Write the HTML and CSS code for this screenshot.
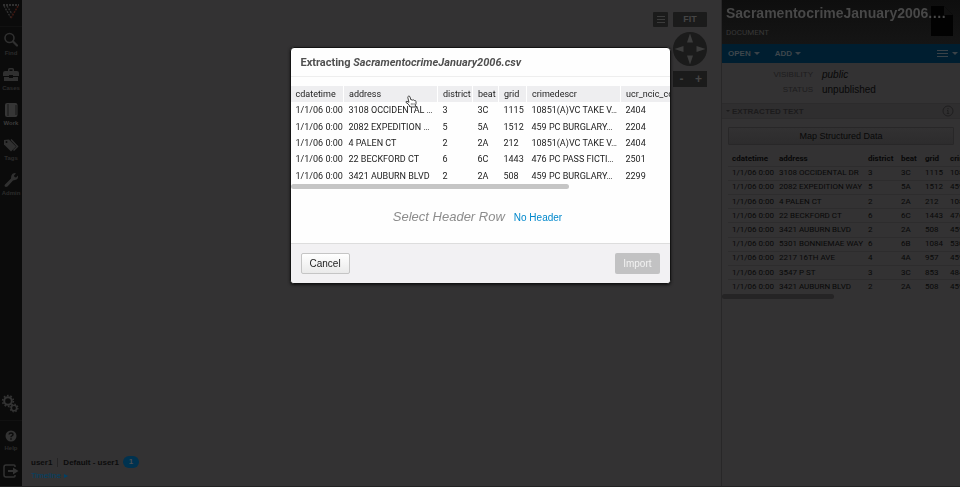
FILE: index.html
```html
<!DOCTYPE html>
<html lang="en">
<head>
<meta charset="utf-8">
<title>Extracting SacramentocrimeJanuary2006.csv</title>
<link rel="stylesheet" href="styles.css">
</head>
<body>
<div class="app">
  <nav class="sidebar">
    <a class="logo" href="#" aria-label="Home">
      <svg width="18" height="18" viewBox="0 0 18 18" fill="none"><path d="M1 3H17" stroke="#303030" stroke-width="2" stroke-dasharray="2 1"/><path d="M2 4l7 12M5 4l5 8" stroke="#303030" stroke-width="1.400" stroke-dasharray="2 1"/><path d="M16 4l-7 12" stroke="#3c1812" stroke-width="1.600" stroke-dasharray="2 1"/></svg>
    </a>
    <a class="nav-item" href="#"><svg width="16" height="16" viewBox="0 0 16 16" fill="none" stroke="#303030"><circle cx="6.500" cy="6" r="4.500" stroke-width="1.600"/><path d="M10 9.500l4 4" stroke-width="2.200" stroke-linecap="round"/></svg><span>Find</span></a>
    <a class="nav-item" href="#"><svg width="16" height="16" viewBox="0 0 16 16" fill="#303030"><path d="M5 4V2.500Q5 1 6.500 1h3Q11 1 11 2.500V4h3q2 0 2 2v3h-6V8H6v1H0V6q0-2 2-2zM6.500 4h3V2.500h-3zM1 10h5v1h4v-1h5v4H1z"/></svg><span>Cases</span></a>
    <a class="nav-item active" href="#"><svg width="16" height="16" viewBox="0 0 16 16"><rect x="2" y="1" width="12.500" height="14" rx="2" fill="#363636"/><path d="M5 2v12M13 3v10" stroke="#161616"/></svg><span>Work</span></a>
    <a class="nav-item" href="#"><svg width="16" height="16" viewBox="0 0 16 16"><path d="M1 3l5-.500 7 7-5 5-7-7z" fill="#303030"/><path d="M8 2.500l6.500 7-4 4" fill="none" stroke="#303030" stroke-width="1.500"/><circle cx="3.500" cy="5" r="1" fill="#0c0c0c"/></svg><span>Tags</span></a>
    <a class="nav-item" href="#"><svg width="16" height="16" viewBox="0 0 16 16"><path d="M10 1.500q2-.900 3 0l-2 2 .500 1.500 1.500.500 2-2q.500 4-3 4.500l-2 .500-5.500 6q-2 1-3-.500 0-1 .500-1.500L8 6.500q0-4 2-5z" fill="#303030"/></svg><span>Admin</span></a>
    <div class="nav-bottom">
      <a class="settings" href="#" aria-label="Settings"><svg width="18" height="20" viewBox="0 0 18 20" fill="none" stroke="#333"><circle cx="7" cy="7" r="3.800" stroke-width="2"/><circle cx="7" cy="7" r="5.400" stroke-width="1.600" stroke-dasharray="1.700 1.693"/><circle cx="13" cy="14" r="2.700" stroke-width="1.600"/><circle cx="13" cy="14" r="3.900" stroke-width="1.200" stroke-dasharray="1.500 1.563"/></svg></a>
      <a class="nav-item help" href="#"><svg width="14" height="14" viewBox="0 0 14 14"><circle cx="7" cy="7" r="5.500" fill="#333"/><path d="M5 5.500Q5.200 4 7 4q2 0 2 1.500Q9 6.300 7.800 7 7 7.500 7 8.300M7 9.300v1.400" fill="none" stroke="#0c0c0c" stroke-width="1.400"/></svg><span>Help</span></a>
      <a class="exit" href="#" aria-label="Log out"><svg width="16" height="14" viewBox="0 0 16 14"><path d="M12 3V2q0-1-1-1H3Q1 1 1 3v8q0 2 2 2h8q1 0 1-1v-1" fill="none" stroke="#333" stroke-width="1.500"/><path d="M5 6h5V3.500L15.500 7 10 10.500V8H5z" fill="#333"/></svg></a>
    </div>
  </nav>

  <main class="canvas">
    <div class="tools">
      <button class="tool list" aria-label="Options"><svg width="8" height="7" viewBox="0 0 8 7"><path d="M0 .500h8M0 3.500h8M0 6.500h8" stroke="#3c3c3c"/></svg></button>
      <div class="tool-stack">
        <button class="tool fit">FIT</button>
        <button class="pan" aria-label="Pan"><svg width="34" height="34" viewBox="0 0 34 34" fill="#3c3c3c"><path d="M17 1.500l3 9h-6zM17 32.500l3-9h-6zM1.500 17l9-3v6zM32.500 17l-9-3v6z"/></svg></button>
        <div class="zoom"><button aria-label="Zoom out">-</button><button aria-label="Zoom in">+</button></div>
      </div>
    </div>
    <footer class="status">
      <div class="user-row"><span class="user">user1</span><span class="workspace">Default - user1</span><span class="badge">1</span></div>
      <a class="timeline" href="#">Timeline <svg width="4" height="4" viewBox="0 0 4 4"><path d="M0 0l4 2-4 2z" fill="#004268"/></svg></a>
    </footer>
  </main>

  <aside class="panel">
    <header class="panel-head">
      <h1>SacramentocrimeJanuary2006.…</h1>
      <p>DOCUMENT</p>
      <svg class="doc-icon" width="22" height="30" viewBox="0 0 22 30"><path d="M0 0h13l9 9v21H0z" fill="#020202"/><path d="M13 0v9h9z" fill="#101010"/></svg>
    </header>
    <div class="menu-bar">
      <button>OPEN <i class="caret"></i></button>
      <button>ADD <i class="caret"></i></button>
      <button class="more" aria-label="More"><svg width="11" height="7" viewBox="0 0 11 7"><path d="M0 .500h11M0 3.500h11M0 6.500h11" stroke="#3a4248"/></svg><i class="caret"></i></button>
    </div>
    <dl class="props">
      <dt>VISIBILITY</dt><dd><em>public</em></dd>
      <dt>STATUS</dt><dd>unpublished</dd>
    </dl>
    <h2 class="section"><i class="dot"></i><span>EXTRACTED TEXT</span><svg width="12" height="12" viewBox="0 0 12 12" fill="none" stroke="#1f1e1f"><circle cx="6" cy="6" r="5"/><path d="M5 5.500h1V8M4.800 8.500h2.400M6 3v1.200"/></svg></h2>
    <button class="map-button">Map Structured Data</button>
    <div class="data-scroll">
      <table class="data">
        <colgroup><col class="d-date"><col class="d-address"><col class="d-district"><col class="d-beat"><col class="d-grid"><col class="d-crime"></colgroup>
        <thead><tr><th>cdatetime</th><th>address</th><th>district</th><th>beat</th><th>grid</th><th>crimedescr</th></tr></thead>
        <tbody>
          <tr><td>1/1/06 0:00</td><td>3108 OCCIDENTAL DR</td><td>3</td><td>3C</td><td>1115</td><td>10851(A)VC</td></tr>
          <tr><td>1/1/06 0:00</td><td>2082 EXPEDITION WAY</td><td>5</td><td>5A</td><td>1512</td><td>459 PC</td></tr>
          <tr><td>1/1/06 0:00</td><td>4 PALEN CT</td><td>2</td><td>2A</td><td>212</td><td>10851(A)VC</td></tr>
          <tr><td>1/1/06 0:00</td><td>22 BECKFORD CT</td><td>6</td><td>6C</td><td>1443</td><td>476 PC</td></tr>
          <tr><td>1/1/06 0:00</td><td>3421 AUBURN BLVD</td><td>2</td><td>2A</td><td>508</td><td>459 PC</td></tr>
          <tr><td>1/1/06 0:00</td><td>5301 BONNIEMAE WAY</td><td>6</td><td>6B</td><td>1084</td><td>530</td></tr>
          <tr><td>1/1/06 0:00</td><td>2217 16TH AVE</td><td>4</td><td>4A</td><td>957</td><td>459 PC</td></tr>
          <tr><td>1/1/06 0:00</td><td>3547 P ST</td><td>3</td><td>3C</td><td>853</td><td>484</td></tr>
          <tr><td>1/1/06 0:00</td><td>3421 AUBURN BLVD</td><td>2</td><td>2A</td><td>508</td><td>459 PC</td></tr>
        </tbody>
      </table>
    </div>
    <div class="panel-thumb"></div>
  </aside>
</div>

<div class="overlay">
  <section class="modal" role="dialog" aria-labelledby="modal-title">
    <h2 id="modal-title" class="modal-title">Extracting <em>SacramentocrimeJanuary2006.csv</em></h2>
    <div class="preview-scroll">
      <table class="preview">
        <colgroup><col class="p-date"><col class="p-address"><col class="p-district"><col class="p-beat"><col class="p-grid"><col class="p-crime"><col class="p-code"></colgroup>
        <tbody>
          <tr class="hover"><td>cdatetime</td><td>address</td><td>district</td><td>beat</td><td>grid</td><td>crimedescr</td><td>ucr_ncic_code</td></tr>
          <tr><td>1/1/06 0:00</td><td>3108 OCCIDENTAL …</td><td>3</td><td>3C</td><td>1115</td><td>10851(A)VC TAKE V…</td><td>2404</td></tr>
          <tr><td>1/1/06 0:00</td><td>2082 EXPEDITION …</td><td>5</td><td>5A</td><td>1512</td><td>459 PC BURGLARY…</td><td>2204</td></tr>
          <tr><td>1/1/06 0:00</td><td>4 PALEN CT</td><td>2</td><td>2A</td><td>212</td><td>10851(A)VC TAKE V…</td><td>2404</td></tr>
          <tr><td>1/1/06 0:00</td><td>22 BECKFORD CT</td><td>6</td><td>6C</td><td>1443</td><td>476 PC PASS FICTI…</td><td>2501</td></tr>
          <tr><td>1/1/06 0:00</td><td>3421 AUBURN BLVD</td><td>2</td><td>2A</td><td>508</td><td>459 PC BURGLARY…</td><td>2299</td></tr>
        </tbody>
      </table>
    </div>
    <div class="preview-thumb"></div>
    <p class="prompt"><em>Select Header Row</em><a href="#">No Header</a></p>
    <footer class="modal-foot"><button class="cancel">Cancel</button><button class="import" disabled>Import</button></footer>
    <svg class="pointer" width="12" height="14" viewBox="0 0 12 14"><path d="M3.500 1.200q1-.600 1.500.800l1 3q1.200-.900 1.700.200 1-.800 1.600.300 1.400-.500 1.700 1.200.300 2-.500 3.300l-.200 2H5.500L3 8.800 1 7.500q-.300-1.300 1-1.200L4 7.300 2.800 2.500q-.200-1 .700-1.300z" fill="#fff" stroke="#333" stroke-width=".900"/><path d="M6.300 8v2.200M7.800 8v2.200M9.200 8v2.200" stroke="#555" stroke-width=".600"/></svg>
  </section>
</div>
</body>
</html>
```

FILE: styles.css
```css
* { box-sizing: border-box; }
body { margin: 0; font-family: "Liberation Sans", Arial, sans-serif; background: #333233; color: #080808; }
button { font: inherit; color: inherit; border: 0; padding: 0; background: none; }
a { text-decoration: none; color: inherit; }
svg { display: block; }
h1, h2, p, dl, dd { margin: 0; }

.app { display: flex; height: 100vh; overflow: hidden; border-bottom: 1px solid #222; }

/* Left navigation */
.sidebar { width: 22px; flex: none; display: flex; flex-direction: column; background: #0b0b0b; color: #2c2c2c; }
.logo { height: 27px; padding: 2px 2px 0; border-bottom: 1px solid #111; margin-bottom: 5px; }
.nav-item { height: 35px; display: flex; flex-direction: column; align-items: center; gap: 1px; font-size: 6px; line-height: 8px; font-weight: bold; }
.nav-item.active { color: #3c3c3c; }
.nav-bottom { margin-top: auto; display: flex; flex-direction: column; align-items: center; padding-bottom: 8px; }
.settings { width: 100%; padding: 0 1px 6px; border-bottom: 1px solid #111; margin-bottom: 8px; }

/* Graph canvas */
.canvas { flex: 1; min-width: 0; display: flex; flex-direction: column; justify-content: space-between; }
.tools { display: flex; justify-content: flex-end; gap: 5px; padding: 12px 14px 0; }
.tool { height: 15px; background: #1b1b1b; border-radius: 1px; color: #454545; }
.list { width: 15px; display: grid; place-items: center; }
.tool-stack { width: 34px; display: flex; flex-direction: column; }
.fit { font-size: 9px; line-height: 15px; font-weight: bold; margin-bottom: 5px; }
.pan { width: 34px; height: 34px; border-radius: 50%; background: #1b1b1b; margin-bottom: 5px; }
.zoom { display: flex; height: 16px; background: #1b1b1b; color: #454545; }
.zoom button { flex: 1; font-size: 12px; line-height: 14px; font-weight: bold; }
.status { padding: 0 9px 5px; font-size: 8px; font-weight: bold; color: #0c0c0c; }
.user-row { display: flex; align-items: center; height: 12px; margin-bottom: 2px; }
.user { padding-right: 5px; border-right: 1px solid #252425; margin-right: 5px; }
.badge { width: 16px; height: 12px; border-radius: 6px; background: #00324f; color: #4a4f52; text-align: center; line-height: 12px; margin-left: 4px; }
.timeline { display: flex; align-items: center; gap: 3px; font-size: 8px; line-height: 11px; font-weight: normal; color: #004268; }

/* Document panel */
.panel { width: 239px; flex: none; overflow: hidden; border-left: 1px solid #282728; }
.panel-head { position: relative; height: 44px; padding: 5px 0 0 4px; background: linear-gradient(#0e0e0e, #151515); color: #484848; }
.panel-head h1 { position: relative; z-index: 1; font-size: 14px; line-height: 17px; white-space: nowrap; }
.panel-head p { font-size: 8px; line-height: 10px; margin-top: 6px; color: #373737; font-family: Roboto, sans-serif; }
.doc-icon { position: absolute; right: 7px; top: 6px; }
.menu-bar { display: flex; align-items: center; height: 19px; padding: 0 2px 0 6px; background: #001e30; color: #3e464c; font-size: 8px; font-weight: bold; gap: 15px; }
.menu-bar button { display: flex; align-items: center; gap: 3px; }
.menu-bar .more { margin-left: auto; gap: 4px; }
.caret { border: 3px solid transparent; border-top-color: #3a4248; border-bottom: 0; }
.props { display: grid; grid-template-columns: 91px 1fr; column-gap: 9px; padding: 4px 0 6px; line-height: 15px; }
.props dt { text-align: right; font-size: 8px; color: #1d1c1d; }
.props dd { font-size: 10px; }
.section { display: flex; align-items: center; gap: 2px; height: 16px; padding: 0 6px 0 4px; background: #2f2e2f; border: 1px solid #2c2b2c; border-width: 1px 0; font-size: 8px; color: #1c1b1c; }
.section svg { margin-left: auto; }
.dot { border: 2px solid transparent; border-top-color: #1c1b1c; border-bottom: 0; }
.map-button { display: block; width: calc(100% - 12px); height: 18px; margin: 8px 6px 7px 6px; border: 1px solid #282728; border-radius: 1px; background: linear-gradient(#323132, #2d2c2d); font-size: 9px; }
.data-scroll { margin-left: 6px; overflow: hidden; }
.data { table-layout: fixed; width: 264px; height: 142px; border-collapse: collapse; font-family: Roboto, sans-serif; font-size: 8px; line-height: 10px; white-space: nowrap; }
.data th, .data td { height: 14px; padding: 0 0 0 4px; text-align: left; border-bottom: 1px solid #2d2c2d; }
.data tr:last-child td { border-bottom: 0; }
.d-date { width: 47px; }
.d-address { width: 89px; }
.d-district { width: 33px; }
.d-beat { width: 24px; }
.d-grid { width: 25px; }
.d-crime { width: 46px; }
.panel-thumb { width: 47%; height: 5px; border-radius: 3px; background: #252425; }

/* Import dialog */
.overlay { position: fixed; inset: 0; display: flex; justify-content: center; align-items: flex-start; padding-top: 47px; }
.modal { position: relative; width: 381px; border: 1px solid #141414; border-radius: 4px; background: #fefefe; box-shadow: 0 1px 3px #111; color: #222; overflow: hidden; }
.modal-title { padding: 8px 10px 7px; border-bottom: 1px solid #eee; font-family: Roboto, sans-serif; font-size: 11px; line-height: 13px; color: #505050; }
.preview-scroll { margin-top: 9px; overflow: hidden; }
.preview { table-layout: fixed; width: 400px; height: 98px; border-collapse: collapse; font-family: Roboto, sans-serif; font-size: 9px; line-height: 12px; white-space: nowrap; }
.preview td { padding: 0 0 0 5px; }
.hover td { background: #eeeef0; border-right: 1px solid #fff; }
.p-date { width: 53px; }
.p-address { width: 94px; }
.p-district { width: 35px; }
.p-beat { width: 26px; }
.p-grid { width: 28px; }
.p-crime { width: 94px; }
.p-code { width: 70px; }
.preview-thumb { width: 278px; height: 5px; border-radius: 3px; background: #c5c5c5; }
.prompt { display: flex; justify-content: center; align-items: baseline; gap: 9px; padding: 19px 10px 16px 5px; line-height: 18px; font-size: 13px; color: #8c8c8c; }
.prompt a { font-size: 10px; color: #0088cc; }
.modal-foot { display: flex; justify-content: space-between; padding: 9px 10px; border-top: 1px solid #ddd; background: #f2f1f3; font-size: 10px; }
.modal-foot button { height: 21px; padding: 0 8px; border-radius: 2px; }
.cancel { border: 1px solid #c5c5c5; background: linear-gradient(#fff, #eaeaea); }
.import { background: #c2c2c3; color: #f2f2f2; }
.pointer { position: absolute; left: 114px; top: 47px; }
```
